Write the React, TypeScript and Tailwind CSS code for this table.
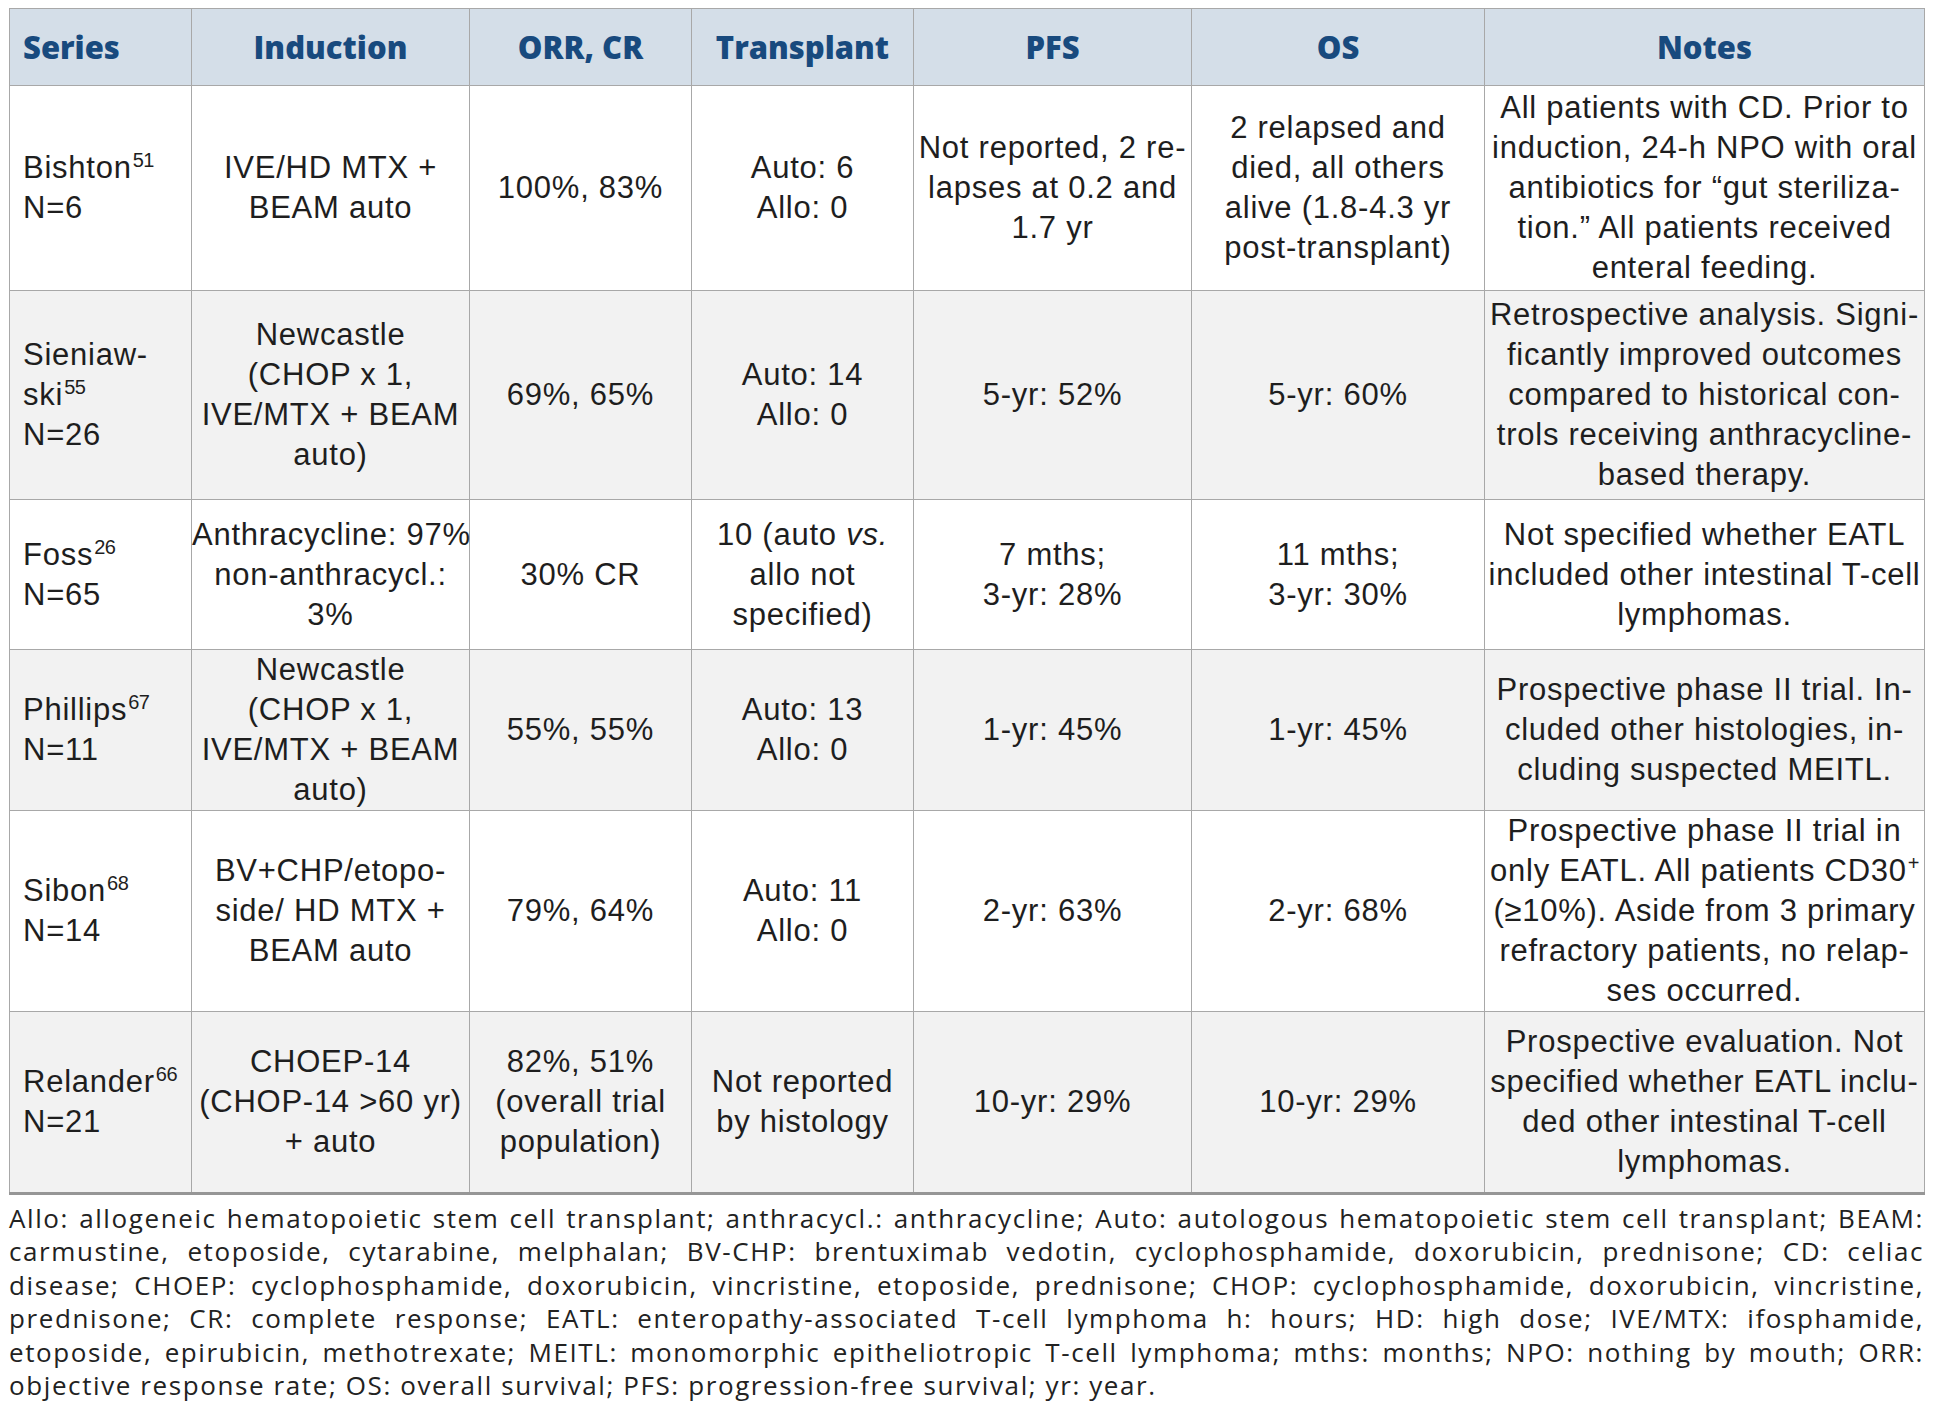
import React from "react"

type Cell = React.ReactNode[]

interface Row {
  cells: Cell[]
  height: string
  shaded: boolean
}

const Sup = ({ children }: { children: React.ReactNode }) => (
  <sup className="text-[20px] tracking-[-0.5px] -top-[11px] ml-[1px]">{children}</sup>
)

const rows: Row[] = [
  {
    height: "h-[205px]",
    shaded: false,
    cells: [
      [<>Bishton<Sup>51</Sup></>, "N=6"],
      ["IVE/HD MTX +", "BEAM auto"],
      ["100%, 83%"],
      ["Auto: 6", "Allo: 0"],
      ["Not reported, 2 re-", "lapses at 0.2 and", "1.7 yr"],
      ["2 relapsed and", "died, all others", "alive (1.8-4.3 yr", "post-transplant)"],
      [
        "All patients with CD. Prior to",
        "induction, 24-h NPO with oral",
        "antibiotics for \u201cgut steriliza-",
        "tion.\u201d All patients received",
        "enteral feeding.",
      ],
    ],
  },
  {
    height: "h-[209px]",
    shaded: true,
    cells: [
      ["Sieniaw-", <>ski<Sup>55</Sup></>, "N=26"],
      ["Newcastle", "(CHOP x 1,", "IVE/MTX + BEAM", "auto)"],
      ["69%, 65%"],
      ["Auto: 14", "Allo: 0"],
      ["5-yr: 52%"],
      ["5-yr: 60%"],
      [
        "Retrospective analysis. Signi-",
        "ficantly improved outcomes",
        "compared to historical con-",
        "trols receiving anthracycline-",
        "based therapy.",
      ],
    ],
  },
  {
    height: "h-[150px]",
    shaded: false,
    cells: [
      [<>Foss<Sup>26</Sup></>, "N=65"],
      ["Anthracycline: 97%", "non-anthracycl.:", "3%"],
      ["30% CR"],
      [<>10 (auto <i>vs.</i></>, "allo not", "specified)"],
      ["7 mths;", "3-yr: 28%"],
      ["11 mths;", "3-yr: 30%"],
      ["Not specified whether EATL", "included other intestinal T-cell", "lymphomas."],
    ],
  },
  {
    height: "h-[159px]",
    shaded: true,
    cells: [
      [<>Phillips<Sup>67</Sup></>, "N=11"],
      ["Newcastle", "(CHOP x 1,", "IVE/MTX + BEAM", "auto)"],
      ["55%, 55%"],
      ["Auto: 13", "Allo: 0"],
      ["1-yr: 45%"],
      ["1-yr: 45%"],
      ["Prospective phase II trial. In-", "cluded other histologies, in-", "cluding suspected MEITL."],
    ],
  },
  {
    height: "h-[201px]",
    shaded: false,
    cells: [
      [<>Sibon<Sup>68</Sup></>, "N=14"],
      ["BV+CHP/etopo-", "side/ HD MTX +", "BEAM auto"],
      ["79%, 64%"],
      ["Auto: 11", "Allo: 0"],
      ["2-yr: 63%"],
      ["2-yr: 68%"],
      [
        "Prospective phase II trial in",
        <>only EATL. All patients CD30<Sup>+</Sup></>,
        "(\u226510%). Aside from 3 primary",
        "refractory patients, no relap-",
        "ses occurred.",
      ],
    ],
  },
  {
    height: "h-[182px]",
    shaded: true,
    cells: [
      [<>Relander<Sup>66</Sup></>, "N=21"],
      ["CHOEP-14", "(CHOP-14 >60 yr)", "+ auto"],
      ["82%, 51%", "(overall trial", "population)"],
      ["Not reported", "by histology"],
      ["10-yr: 29%"],
      ["10-yr: 29%"],
      ["Prospective evaluation. Not", "specified whether EATL inclu-", "ded other intestinal T-cell", "lymphomas."],
    ],
  },
]

const headers = ["Series", "Induction", "ORR, CR", "Transplant", "PFS", "OS", "Notes"]
const widths = ["w-[182px]", "w-[278px]", "w-[222px]", "w-[222px]", "w-[278px]", "w-[293px]", "w-[440px]"]

const footnote = [
  "Allo: allogeneic hematopoietic stem cell transplant; anthracycl.: anthracycline; Auto: autologous hematopoietic stem cell transplant; BEAM:",
  "carmustine, etoposide, cytarabine, melphalan; BV-CHP: brentuximab vedotin, cyclophosphamide, doxorubicin, prednisone; CD: celiac",
  "disease; CHOEP: cyclophosphamide, doxorubicin, vincristine, etoposide, prednisone; CHOP: cyclophosphamide, doxorubicin, vincristine,",
  "prednisone; CR: complete response; EATL: enteropathy-associated T-cell lymphoma h: hours; HD: high dose; IVE/MTX: ifosphamide,",
  "etoposide, epirubicin, methotrexate; MEITL: monomorphic epitheliotropic T-cell lymphoma; mths: months; NPO: nothing by mouth; ORR:",
  "objective response rate; OS: overall survival; PFS: progression-free survival; yr: year.",
]

export default function App() {
  return (
    <div className="min-h-screen bg-white pt-[8px] pl-[9px] pr-[11px]">
      <table className="table-fixed border-collapse w-[1915px] font-['Liberation_Sans',Arial,sans-serif] text-[#1e1e1e]">
        <colgroup>
          {widths.map((w, i) => (
            <col key={i} className={w} />
          ))}
        </colgroup>
        <thead>
          <tr className="bg-[#d4dee8]">
            {headers.map((h, i) => (
              <th
                key={h}
                className={`h-[77px] border border-[#a8a8a8] font-['Open_Sans',sans-serif] font-extrabold text-[31px] text-[#184a7e] ${
                  i === 0 ? "text-left pl-[13px]" : "text-center"
                }`}
              >
                {h}
              </th>
            ))}
          </tr>
        </thead>
        <tbody className="text-[31px] leading-[40px]">
          {rows.map((row, r) => (
            <tr key={r} className={row.shaded ? "bg-[#f2f2f2]" : "bg-white"}>
              {row.cells.map((cell, c) => (
                <td
                  key={c}
                  className={`${row.height} border border-[#a8a8a8] ${
                    r === rows.length - 1 ? "border-b-[3px] border-b-[#969696]" : ""
                  } ${c === 0 ? "text-left pl-[13px]" : "text-center"} align-middle tracking-[0.75px]`}
                >
                  {cell.map((line, l) => (
                    <div key={l} className="whitespace-nowrap">
                      {line}
                    </div>
                  ))}
                </td>
              ))}
            </tr>
          ))}
        </tbody>
      </table>
      <div className="mt-[7px] w-[1915px] font-['Open_Sans',sans-serif] text-[26px] tracking-[1.6px] leading-[33.4px] text-[#222222]">
        {footnote.map((line, i) => (
          <div
            key={i}
            className={`whitespace-nowrap ${i < footnote.length - 1 ? "text-justify [text-align-last:justify]" : "text-left"}`}
          >
            {line}
          </div>
        ))}
      </div>
    </div>
  )
}
